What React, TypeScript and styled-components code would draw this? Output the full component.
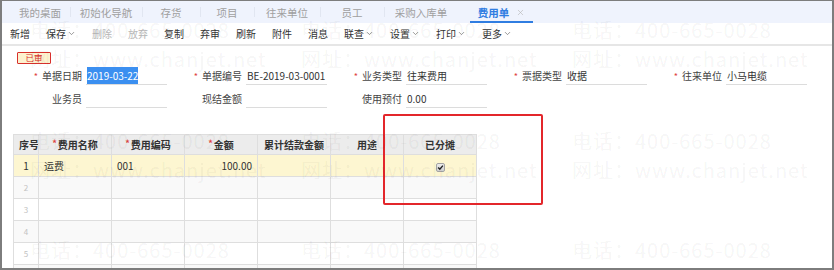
import React from 'react';
import { ChevronDown, X } from 'lucide-react';
import styled, { createGlobalStyle } from 'styled-components';

const GlobalStyle = createGlobalStyle`
  body {
    margin: 0;
    background: #fff;
    font-family: 'Noto Sans CJK SC', 'Noto Sans', sans-serif;
  }
`;

const Frame = styled.div`
  position: relative;
  width: 834px;
  height: 270px;
  box-sizing: border-box;
  border: 2px solid #7d7d7d;
  border-top-width: 1px;
  overflow: hidden;
  background: #fff;
  font-size: 10px;
  color: #333;
`;

const TabBar = styled.div`
  display: flex;
  height: 22px;
  padding-left: 8px;
  background: #eff3fd;
`;

const Tab = styled.div<{ $w: number; $active?: boolean }>`
  position: relative;
  width: ${(p) => p.$w}px;
  display: flex;
  align-items: center;
  justify-content: center;
  gap: 7px;
  font-size: 10.5px;
  color: ${(p) => (p.$active ? '#2f7de1' : '#a0a0a0')};
  font-weight: ${(p) => (p.$active ? 600 : 400)};
  &::before {
    content: '';
    position: absolute;
    left: 0;
    top: 6px;
    height: 10px;
    width: 1px;
    background: ${(p) => (p.$active ? 'transparent' : '#e1e6f1')};
  }
  &::after {
    content: '';
    position: absolute;
    left: 12px;
    right: 12px;
    bottom: 0;
    height: 2px;
    background: ${(p) => (p.$active ? '#2f7de1' : 'transparent')};
  }
  &:first-child::before {
    display: none;
  }
  svg {
    color: #b5b5b5;
  }
`;

const Toolbar = styled.div`
  display: flex;
  align-items: center;
  gap: 16px;
  height: 21px;
  padding-left: 8px;
  border-bottom: 2px solid #e6e6e6;
`;

const ToolItem = styled.span<{ $disabled?: boolean }>`
  display: inline-flex;
  align-items: center;
  gap: 1px;
  color: ${(p) => (p.$disabled ? '#b8b8b8' : '#333')};
  svg {
    color: #777;
  }
`;

const Badge = styled.div`
  width: 34px;
  height: 12px;
  margin: 6px 0 0 15px;
  box-sizing: border-box;
  border: 1.5px solid #d8302c;
  border-radius: 1px;
  background: #fdf1cf;
  color: #d8302c;
  font-size: 8.5px;
  line-height: 9px;
  text-align: center;
`;

const FormGrid = styled.div`
  display: grid;
  grid-template-columns: repeat(5, 160px);
  row-gap: 3px;
  margin: 2px 0 0 3px;
`;

const Field = styled.div`
  display: grid;
  grid-template-columns: 77px 81px;
  column-gap: 4px;
`;

const Label = styled.div`
  text-align: right;
  line-height: 19px;
  color: #444;
`;

const Required = styled.span`
  color: #e0433f;
  margin-right: 4px;
  font-size: 9px;
`;

const Input = styled.div`
  height: 19px;
  box-sizing: border-box;
  border-bottom: 1px solid #dcdcdc;
  line-height: 19px;
  padding-left: 1px;
  white-space: nowrap;
`;

const Selected = styled.span`
  background: #3b8ff0;
  color: #fff;
  padding: 1px 0;
`;

const Grid = styled.table`
  margin: 26px 0 0 11px;
  border-collapse: collapse;
  table-layout: fixed;
  width: 463px;
  font-size: 10px;
  td,
  th {
    border: 1px solid #dedede;
    padding: 0 5px;
    overflow: hidden;
    white-space: nowrap;
  }
`;

const HeadRow = styled.tr`
  height: 20px;
  background: #ececec;
  th {
    font-weight: 700;
    color: #333;
    text-align: center;
  }
`;

const BodyRow = styled.tr<{ $active?: boolean; $odd?: boolean }>`
  height: 22px;
  background: ${(p) => (p.$active ? '#fdf6d1' : p.$odd ? '#f9f9f9' : '#fff')};
`;

const SeqCell = styled.td<{ $dim?: boolean }>`
  text-align: center;
  color: ${(p) => (p.$dim ? '#c2c2c2' : '#333')};
  font-size: ${(p) => (p.$dim ? '8px' : '10px')};
`;

const Cell = styled.td<{ $align?: string }>`
  text-align: ${(p) => p.$align || 'left'};
`;

const HeadStar = styled.span`
  color: #e0433f;
  font-size: 9px;
  vertical-align: top;
  margin-right: 1px;
`;

const Highlight = styled.div`
  position: absolute;
  left: 381px;
  top: 113px;
  width: 160px;
  height: 91px;
  box-sizing: border-box;
  border: 2px solid #e3262b;
  border-radius: 2px;
  pointer-events: none;
`;

const Watermark = styled.span<{ $x: number; $y: number }>`
  position: absolute;
  left: ${(p) => p.$x}px;
  top: ${(p) => p.$y}px;
  font-size: 20px;
  line-height: 20px;
  letter-spacing: 1px;
  color: rgba(0, 0, 0, 0.055);
  white-space: nowrap;
  pointer-events: none;
`;

const tabs = [
  { label: '我的桌面', w: 60 },
  { label: '初始化导航', w: 72 },
  { label: '存货', w: 58 },
  { label: '项目', w: 54 },
  { label: '往来单位', w: 66 },
  { label: '员工', w: 64 },
  { label: '采购入库单', w: 74 },
  { label: '费用单', w: 87, active: true },
];

const tools = [
  { label: '新增' },
  { label: '保存', menu: true },
  { label: '删除', disabled: true },
  { label: '放弃', disabled: true },
  { label: '复制' },
  { label: '弃审' },
  { label: '刷新' },
  { label: '附件' },
  { label: '消息' },
  { label: '联查', menu: true },
  { label: '设置', menu: true },
  { label: '打印', menu: true },
  { label: '更多', menu: true },
];

type FieldDef = { label: string; req?: boolean; value?: string; selected?: boolean } | null;

const fields: FieldDef[] = [
  { label: '单据日期', req: true, value: '2019-03-22', selected: true },
  { label: '单据编号', req: true, value: 'BE-2019-03-0001' },
  { label: '业务类型', req: true, value: '往来费用' },
  { label: '票据类型', req: true, value: '收据' },
  { label: '往来单位', req: true, value: '小马电缆' },
  { label: '业务员' },
  { label: '现结金额' },
  { label: '使用预付', value: '0.00' },
  null,
  null,
];

const columns = [
  { label: '序号', w: 25 },
  { label: '费用名称', w: 73, req: true },
  { label: '费用编码', w: 73, req: true },
  { label: '金额', w: 73, req: true },
  { label: '累计结款金额', w: 73 },
  { label: '用途', w: 73 },
  { label: '已分摊', w: 73 },
];

const markCols = [28, 299, 570];
const marks = [
  { y: 19, text: '电话：400-665-0028' },
  { y: 48, text: '网址：www.chanjet.net' },
  { y: 130, text: '电话：400-665-0028' },
  { y: 159, text: '网址：www.chanjet.net' },
  { y: 239, text: '电话：400-665-0028' },
].flatMap((row) => markCols.map((x) => ({ ...row, x })));

const CheckBox = () => (
  <svg width="9" height="9" viewBox="0 0 9 9" style={{ verticalAlign: 'middle' }}>
    <defs>
      <linearGradient id="cb" x1="0" y1="0" x2="0" y2="1">
        <stop offset="0" stopColor="#eeeeee" />
        <stop offset="1" stopColor="#cfcfcf" />
      </linearGradient>
    </defs>
    <rect x="0.5" y="0.5" width="8" height="8" rx="1.5" fill="url(#cb)" stroke="#a3a3a3" />
    <path d="M2.2 4.6 L3.8 6.2 L6.9 2.6" fill="none" stroke="#222" strokeWidth="1.4" />
  </svg>
);

export default function App() {
  return (
    <>
      <GlobalStyle />
      <Frame>
        <TabBar>
          {tabs.map((t) => (
            <Tab key={t.label} $w={t.w} $active={t.active}>
              {t.label}
              {t.active && <X size={9} strokeWidth={1.6} />}
            </Tab>
          ))}
        </TabBar>
        <Toolbar>
          {tools.map((t) => (
            <ToolItem key={t.label} $disabled={t.disabled}>
              {t.label}
              {t.menu && <ChevronDown size={9} strokeWidth={2} />}
            </ToolItem>
          ))}
        </Toolbar>
        <Badge>已审</Badge>
        <FormGrid>
          {fields.map((f, i) =>
            f ? (
              <Field key={i}>
                <Label>
                  {f.req && <Required>*</Required>}
                  {f.label}
                </Label>
                <Input>{f.selected ? <Selected>{f.value}</Selected> : f.value}</Input>
              </Field>
            ) : (
              <div key={i} />
            ),
          )}
        </FormGrid>
        <Grid>
          <colgroup>
            {columns.map((c) => (
              <col key={c.label} style={{ width: c.w }} />
            ))}
          </colgroup>
          <thead>
            <HeadRow>
              {columns.map((c) => (
                <th key={c.label}>
                  {c.req && <HeadStar>*</HeadStar>}
                  {c.label}
                </th>
              ))}
            </HeadRow>
          </thead>
          <tbody>
            <BodyRow $active>
              <SeqCell>1</SeqCell>
              <Cell>运费</Cell>
              <Cell>001</Cell>
              <Cell $align="right">100.00</Cell>
              <Cell />
              <Cell />
              <Cell $align="center">
                <CheckBox />
              </Cell>
            </BodyRow>
            {[2, 3, 4, 5, 6].map((n) => (
              <BodyRow key={n} $odd={n % 2 === 0}>
                <SeqCell $dim>{n < 6 ? n : ''}</SeqCell>
                <Cell />
                <Cell />
                <Cell />
                <Cell />
                <Cell />
                <Cell />
              </BodyRow>
            ))}
          </tbody>
        </Grid>
        <Highlight />
        {marks.map((m, i) => (
          <Watermark key={i} $x={m.x} $y={m.y}>
            {m.text}
          </Watermark>
        ))}
      </Frame>
    </>
  );
}
